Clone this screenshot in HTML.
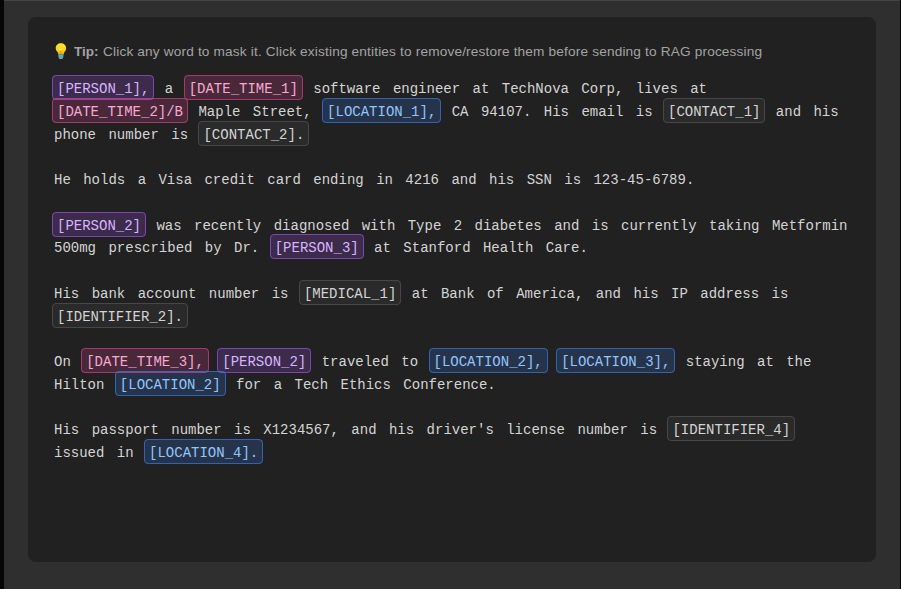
<!DOCTYPE html>
<html lang="en">
<head>
<meta charset="utf-8">
<title>Entity masking</title>
<style>
*{box-sizing:border-box;margin:0;padding:0}
html,body{width:901px;height:589px;overflow:hidden;background:#2f2f2f}
body{position:relative;font-family:"Liberation Sans",sans-serif}
.lstrip{position:absolute;left:0;top:0;width:4px;height:589px;background:#050505}
.rstrip{position:absolute;left:900px;top:0;width:1px;height:589px;background:#050505}
.tstrip{position:absolute;left:4px;top:0;width:896px;height:1px;background:#444}
.panel{position:absolute;left:28px;top:17px;width:848px;height:545px;background:#212121;border-radius:8px;padding:24px}
.tip{position:relative;font-family:"Liberation Sans",sans-serif;font-size:13px;line-height:20px;color:#a3a3a3;height:20px;white-space:nowrap}
.tip b{position:absolute;left:21.5px;top:1px;font-weight:700;transform-origin:0 50%;transform:scaleX(1.04)}
.tip span{position:absolute;left:50.5px;top:1px;letter-spacing:.15px;transform-origin:0 50%;transform:scaleX(1.05)}
.tip svg{position:absolute;left:2px;top:1px;width:13px;height:18px}
.txt{margin-top:17px;font-family:"Liberation Mono",monospace;font-size:14px;line-height:22.75px;color:#d4d4d4;white-space:pre}
.w{padding:0 2px}
.e{padding:5px 4px 2px;border:1px solid;border-radius:4px}
.p{background:rgba(168,85,247,.2);border-color:rgba(168,85,247,.6);color:#d8b4fe}
.d{background:rgba(236,72,153,.2);border-color:rgba(236,72,153,.55);color:#f9a8d4}
.l{background:rgba(59,130,246,.2);border-color:rgba(59,130,246,.6);color:#93c5fd}
.g{background:#2a2a2a;border-color:#474747;color:#d4d4d4}
</style>
</head>
<body>
<div class="lstrip"></div><div class="rstrip"></div><div class="tstrip"></div>
<div class="panel">
<div class="tip"><svg viewBox="0 0 13 18"><defs><linearGradient id="bg" x1="0" y1="0" x2="0" y2="1"><stop offset="0" stop-color="#ffe62e"/><stop offset=".6" stop-color="#fbd31a"/><stop offset="1" stop-color="#eea600"/></linearGradient></defs><path d="M6.900 1.200C4 1.200 1.700 3.300 1.700 6.100c0 1.900 1 3.100 1.800 4 .5.600.7 1.400.7 2.400h5.600c0-1 .2-1.800.7-2.400.8-.9 1.600-2.100 1.600-4C12.100 3.300 9.800 1.200 6.900 1.200z" fill="url(#bg)"/><path d="M5.600 8.200l1.300.9 1.300-.9M6.900 9.100v3.200" stroke="#d98a00" stroke-width=".7" fill="none"/><circle cx="6" cy="7.600" r=".8" fill="#fff7c2"/><circle cx="7.700" cy="8.100" r=".5" fill="#fff7c2"/><path d="M4.200 12.400h5.400l-.5 3c-.1.900-.8 1.500-1.600 1.500H6.300c-.8 0-1.500-.6-1.600-1.500z" fill="#62b3cc"/><path d="M4.400 14.300h5M4.600 15.700h4.600" stroke="#4a98b4" stroke-width=".5"/></svg><b>Tip:</b><span>Click any word to mask it. Click existing entities to remove/restore them before sending to RAG processing</span></div>
<div class="txt"><span class="e p">[PERSON_1],</span> <span class="w">a</span> <span class="e d">[DATE_TIME_1]</span> <span class="w">software</span> <span class="w">engineer</span> <span class="w">at</span> <span class="w">TechNova</span> <span class="w">Corp,</span> <span class="w">lives</span> <span class="w">at</span>
<span class="e d">[DATE_TIME_2]/B</span> <span class="w">Maple</span> <span class="w">Street,</span> <span class="e l">[LOCATION_1],</span> <span class="w">CA</span> <span class="w">94107.</span> <span class="w">His</span> <span class="w">email</span> <span class="w">is</span> <span class="e g">[CONTACT_1]</span> <span class="w">and</span> <span class="w">his</span>
<span class="w">phone</span> <span class="w">number</span> <span class="w">is</span> <span class="e g">[CONTACT_2].</span>

<span class="w">He</span> <span class="w">holds</span> <span class="w">a</span> <span class="w">Visa</span> <span class="w">credit</span> <span class="w">card</span> <span class="w">ending</span> <span class="w">in</span> <span class="w">4216</span> <span class="w">and</span> <span class="w">his</span> <span class="w">SSN</span> <span class="w">is</span> <span class="w">123-45-6789.</span>

<span class="e p">[PERSON_2]</span> <span class="w">was</span> <span class="w">recently</span> <span class="w">diagnosed</span> <span class="w">with</span> <span class="w">Type</span> <span class="w">2</span> <span class="w">diabetes</span> <span class="w">and</span> <span class="w">is</span> <span class="w">currently</span> <span class="w">taking</span> <span class="w">Metformin</span>
<span class="w">500mg</span> <span class="w">prescribed</span> <span class="w">by</span> <span class="w">Dr.</span> <span class="e p">[PERSON_3]</span> <span class="w">at</span> <span class="w">Stanford</span> <span class="w">Health</span> <span class="w">Care.</span>

<span class="w">His</span> <span class="w">bank</span> <span class="w">account</span> <span class="w">number</span> <span class="w">is</span> <span class="e g">[MEDICAL_1]</span> <span class="w">at</span> <span class="w">Bank</span> <span class="w">of</span> <span class="w">America,</span> <span class="w">and</span> <span class="w">his</span> <span class="w">IP</span> <span class="w">address</span> <span class="w">is</span>
<span class="e g">[IDENTIFIER_2].</span>

<span class="w">On</span> <span class="e d">[DATE_TIME_3],</span> <span class="e p">[PERSON_2]</span> <span class="w">traveled</span> <span class="w">to</span> <span class="e l">[LOCATION_2],</span> <span class="e l">[LOCATION_3],</span> <span class="w">staying</span> <span class="w">at</span> <span class="w">the</span>
<span class="w">Hilton</span> <span class="e l">[LOCATION_2]</span> <span class="w">for</span> <span class="w">a</span> <span class="w">Tech</span> <span class="w">Ethics</span> <span class="w">Conference.</span>

<span class="w">His</span> <span class="w">passport</span> <span class="w">number</span> <span class="w">is</span> <span class="w">X1234567,</span> <span class="w">and</span> <span class="w">his</span> <span class="w">driver's</span> <span class="w">license</span> <span class="w">number</span> <span class="w">is</span> <span class="e g">[IDENTIFIER_4]</span>
<span class="w">issued</span> <span class="w">in</span> <span class="e l">[LOCATION_4].</span></div>
</div>
</body>
</html>
